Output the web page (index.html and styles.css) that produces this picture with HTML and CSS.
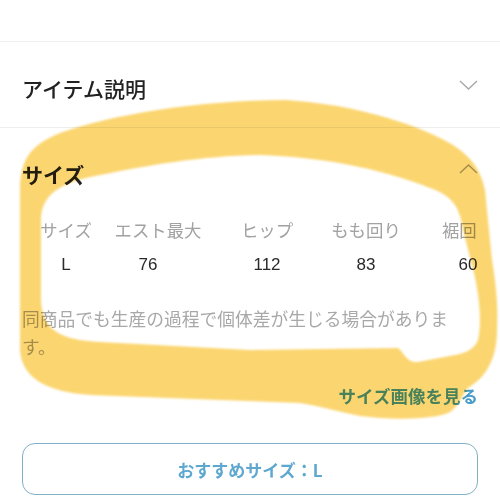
FILE: index.html
```html
<!DOCTYPE html>
<html lang="ja">
<head>
  <meta charset="UTF-8">
  <meta name="viewport" content="width=device-width, initial-scale=1.0">
  <title>サイズ</title>
  <link rel="stylesheet" href="styles.css">
</head>
<body>
  <div class="top-gap"></div>

  <section class="panel">
    <div class="panel-head">
      <h2 class="panel-title">アイテム説明</h2>
      <svg class="chevron" width="19" height="10" viewBox="0 0 19 10"><polyline points="1,1 9.5,9 18,1"/></svg>
    </div>
  </section>

  <section class="panel">
    <div class="panel-head">
      <h2 class="panel-title strong">サイズ</h2>
      <svg class="chevron up" width="19" height="10" viewBox="0 0 19 10"><polyline points="1,9 9.5,1 18,9"/></svg>
    </div>

    <div class="size-table">
      <div class="cell head">サイズ</div>
      <div class="cell head">エスト最大</div>
      <div class="cell head">ヒップ</div>
      <div class="cell head">もも回り</div>
      <div class="cell head">裾回り</div>
      <div class="cell val">L</div>
      <div class="cell val shift">76</div>
      <div class="cell val">112</div>
      <div class="cell val">83</div>
      <div class="cell val">60</div>
    </div>

    <p class="note">同商品でも生産の過程で個体差が生じる場合があります。</p>

    <div class="link-row">
      <a class="size-link" href="#">サイズ画像を見る</a>
    </div>

    <button class="recommend">おすすめサイズ：L</button>
  </section>

  <!-- highlighter marking on top of the screenshot -->
  <svg class="marker" width="500" height="500" viewBox="0 0 500 500">
    <defs>
      <filter id="soft"><feGaussianBlur stdDeviation="1.2"/></filter>
    </defs>
    <path fill="#fbd56f" fill-rule="evenodd" filter="url(#soft)" d="
      M 285 100
      C 340 103, 400 118, 440 138
      C 465 150, 480 165, 485 190
      L 492 260
      C 497 290, 498 310, 497 330
      C 497 360, 485 378, 468 388
      C 462 395, 460 405, 450 412
      C 435 420, 390 420, 360 416
      C 340 412, 320 406, 300 403
      L 90 395
      C 50 392, 22 380, 20 350
      L 20 190
      C 20 160, 30 145, 60 133
      C 110 115, 200 100, 285 100 Z
      M 260 155
      C 320 157, 380 168, 430 188
      C 450 195, 460 205, 463 230
      L 472 265
      C 480 295, 482 325, 478 340
      C 474 350, 465 353, 455 355
      L 418 362
      C 406 363, 404 352, 398 348
      L 250 350
      L 100 342
      C 60 340, 42 330, 41 300
      L 41 220
      C 41 195, 60 182, 100 175
      C 150 165, 200 156, 260 155 Z"/>
  </svg>
</body>
</html>
```

FILE: styles.css
```css
body {
  margin: 0;
  position: relative;
  width: 500px;
  height: 500px;
  overflow: hidden;
  background: #fff;
  font-family: "Noto Sans CJK JP", "Noto Sans", sans-serif;
  color: #222;
}

.top-gap {
  height: 41px;
}

.panel {
  border-top: 1px solid #eeeeee;
  padding: 0 22px;
}

.panel-head {
  display: flex;
  justify-content: space-between;
  align-items: center;
  padding: 36px 0 28px;
}

.panel-title {
  margin: 0;
  font-size: 21px;
  line-height: 21px;
  font-weight: 500;
  color: #222;
}

.panel-title.strong {
  font-weight: 700;
}

.chevron {
  margin-bottom: 8px;
}

.chevron.up {
  margin-bottom: 11px;
}

.chevron polyline {
  fill: none;
  stroke: #a8a8a8;
  stroke-width: 1.4;
}

/* size table, last column runs past the edge */
.size-table {
  display: grid;
  grid-template-columns: 88px 96px 122px 76px 128px;
  row-gap: 11px;
  margin-top: 5px;
  width: 456px;
  overflow: hidden;
}

.cell {
  text-align: center;
  white-space: nowrap;
  line-height: 24px;
}

.cell.head {
  font-size: 17.4px;
  color: #a2a2a2;
}

.cell.val {
  font-family: "Liberation Sans", "Noto Sans CJK JP", sans-serif;
  font-size: 17px;
  color: #2a2a2a;
}

.cell.shift {
  padding-right: 20px;
}

.note {
  margin: 27px 0 0;
  max-width: 440px;
  font-size: 17.75px;
  line-height: 28px;
  color: #a8a8a8;
}

.link-row {
  display: flex;
  justify-content: flex-end;
  margin-top: 24px;
  line-height: 24px;
}

.size-link {
  font-size: 17.5px;
  font-weight: 700;
  color: #4a9ccb;
  text-decoration: none;
}

.recommend {
  display: block;
  width: 100%;
  height: 52px;
  margin-top: 35px;
  border: 1.5px solid #7fb1c6;
  border-radius: 13px;
  background: #fff;
  font-family: "Noto Sans CJK JP", sans-serif;
  font-size: 17px;
  font-weight: 700;
  color: #5ea8d0;
}

.marker {
  position: absolute;
  top: 0;
  left: 0;
  pointer-events: none;
  mix-blend-mode: multiply;
}
```
